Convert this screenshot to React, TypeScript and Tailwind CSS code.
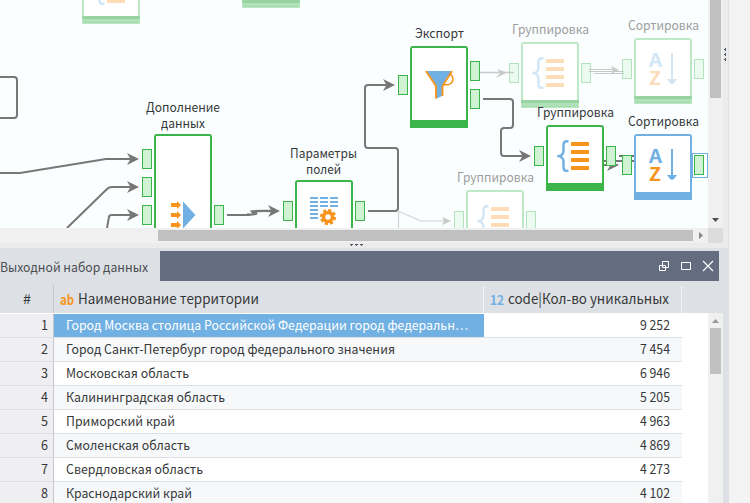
import React from 'react';

type Tone = 'green' | 'blue' | 'faded';

function Label({ x, y, w, text, faded }: { x: number; y: number; w: number; text: string; faded?: boolean }) {
  return (
    <svg className="absolute overflow-visible" style={{ left: x, top: y, width: w, height: 18 }}>
      <text x="0" y="14" textLength={w} lengthAdjust="spacingAndGlyphs" className={faded ? 'fill-[#9b9d9e] text-[13px]' : 'fill-[#363839] text-[13px]'}>
        {text}
      </text>
    </svg>
  );
}

function Fit({ text, w, size, className }: { text: string; w: number; size: number; className: string }) {
  return (
    <svg className="h-5 shrink-0 overflow-visible" style={{ width: w }}>
      <text x="0" y="14" fontSize={size} textLength={w} lengthAdjust="spacingAndGlyphs" className={className}>
        {text}
      </text>
    </svg>
  );
}

function Port({ x, y, faded }: { x: number; y: number; faded?: boolean }) {
  return (
    <div
      className={faded ? 'absolute h-5 w-2.5 border border-[#b5e3bd] bg-[#ecfbf0]' : 'absolute h-5 w-2.5 border border-[#3bb54a] bg-[#cff3d2]'}
      style={{ left: x, top: y }}
    />
  );
}

const frame: Record<Tone, string> = {
  green: 'border-[#3bb54a]',
  blue: 'border-[#71b0e3]',
  faded: 'border-[#bfe8c6]',
};

function Node({ x, y, h, tone, children }: { x: number; y: number; h: number; tone: Tone; children?: React.ReactNode }) {
  return (
    <div className={`absolute flex w-[58px] flex-col rounded-t-[3px] border-2 border-b-0 bg-white ${frame[tone]}`} style={{ left: x, top: y, height: h }}>
      <div className="flex min-h-0 flex-1 items-start justify-center">{children}</div>
      {tone === 'faded' ? (
        <div className="-mx-0.5 flex h-2 shrink-0 flex-col border border-[#bce7c3] bg-[#b1e1b9]">
          <div className="-mx-px -mt-px h-[3px] bg-[#97d4a2]" />
          <div className="mt-[3px] h-px bg-[#a3dbac]" />
        </div>
      ) : (
        <div className={tone === 'green' ? '-mx-0.5 h-2 shrink-0 bg-[#3bb54a]' : '-mx-0.5 h-2 shrink-0 bg-[#71b0e3]'} />
      )}
    </div>
  );
}

function GroupIcon({ faded }: { faded?: boolean }) {
  return (
    <svg className="mt-[13px] mr-[3px] shrink-0" width="33" height="32" opacity={faded ? 0.31 : 1}>
      <path d="M11.500 1.300H10Q6.500 1.300 6.500 4.800V10.500Q6.500 15 2 16.200Q6.500 17.400 6.500 22V27.500Q6.500 31 10 31H11.500" fill="none" stroke="#71b0e3" strokeWidth="2.400" />
      <path d="M14 2h18v4H14zM14 10h18v4H14zM14 18h18v4H14zM14 26h18v4H14z" fill="#f7941e" />
    </svg>
  );
}

function SortIcon({ faded }: { faded?: boolean }) {
  return (
    <svg className="mt-[13px] ml-0.5 shrink-0 overflow-visible" width="32" height="34" opacity={faded ? 0.31 : 1}>
      <text x="1" y="14" fontSize="19" fontWeight="700" textLength="13" lengthAdjust="spacingAndGlyphs" fill="#71b0e3">A</text>
      <text x="1" y="32" fontSize="19" fontWeight="700" textLength="12" lengthAdjust="spacingAndGlyphs" fill="#f7941e">Z</text>
      <path d="M24 0v28" stroke="#71b0e3" strokeWidth="2" />
      <path d="M19 26h10l-3 4-2 1-2-1z" fill="#71b0e3" />
    </svg>
  );
}

function MergeIcon() {
  return (
    <svg className="mt-[64px] ml-0.5 shrink-0 overflow-visible" width="26" height="30">
      <path d="M12 1.500L24.500 15 12 28.500z" fill="#71b0e3" />
      <path d="M0 3h6V1l4 4-4 4V7H0zM0 13h6v-2l4 4-4 4v-2H0zM0 23h6v-2l4 4-4 4v-2H0z" fill="#f7941e" />
    </svg>
  );
}

function FieldsIcon() {
  return (
    <svg className="mt-[15px] ml-0.5 shrink-0" width="30" height="30">
      <path d="M0 1h8M10 1h8M20 1h8M0 5h8M10 5h8M20 5h8M0 9h8M10 9h8M20 9h8M0 13h8M0 17h8M0 21h8" stroke="#71b0e3" strokeWidth="2" />
      <circle cx="18" cy="20" r="4.500" fill="none" stroke="#f7941e" strokeWidth="3.600" />
      <circle cx="18" cy="20" r="6.800" fill="none" stroke="#f7941e" strokeWidth="2.600" strokeDasharray="3.200 2.141" />
    </svg>
  );
}

function FunnelIcon() {
  return (
    <svg className="mt-[22px] ml-0.5 shrink-0" width="30" height="30">
      <path d="M1 1H27L18 16V25.500L11 29V16z" fill="#71b0e3" />
      <path d="M1 1L11 16V28.500M27 1L17.500 16V26" fill="none" stroke="#f7941e" strokeWidth="1.900" />
      <path d="M25 4C28.500 6 29 10 26.500 13Q24 15.500 19 14.500" fill="none" stroke="#f7941e" strokeWidth="1.600" />
    </svg>
  );
}

function Arrow({ x, y }: { x: number; y: number }) {
  return <path d={`M${x} ${y}l-12 -6 3.5 6 -3.5 6z`} fill="#777" />;
}

function Wires() {
  return (
    <svg className="absolute inset-0" width="708" height="228" fill="none" stroke="#777" strokeWidth="2">
      <path d="M0 77H14Q17 77 17 80V115Q17 118 14 118H0" />
      <path d="M0 173H20L106 159H131M67 228L107 189Q109 187 112 187H131M107 228L109 217Q109 215 112 215H131M227 215H250M368 211H395Q398 211 398 208V151Q398 148 395 148H368Q365 148 365 145V88Q365 85 368 85H387M483 99H510Q513 99 513 102V125Q513 128 510 128H504Q501 128 501 131V153Q501 156 504 156H523" />
      <path d="M247 214.500Q253 215 257 213.500Q253 213 252 211.500Q259 210.500 272 211" strokeWidth="2.300" />
      <path d="M398 211L421 221H445M398.500 212V228" stroke="#d0d2d2" strokeWidth="1.200" />
      <path d="M480 72.500H514" stroke="#c8caca" strokeWidth="1.600" />
      <path d="M589 69.500H614M589 71.500H624M594 73.500H624" stroke="#c8caca" strokeWidth="1" />
      <path d="M604 161H634M604 165H612M619 156H634" />
      <g stroke="none">
        <Arrow x={139} y={159} />
        <Arrow x={139} y={187} />
        <Arrow x={139} y={215} />
        <Arrow x={280} y={211} />
        <Arrow x={395} y={85} />
        <Arrow x={531} y={156} />
        <Arrow x={619} y={165} />
        <path d="M451 221l-9 -4 2 4 -2 4zM507 72.500l-10 -3.500 3 4 -4 5zM619 70l-8 -4 2 4 -2 4z" fill="#c8caca" />
      </g>
    </svg>
  );
}

function Canvas() {
  return (
    <div className="relative h-[228px] w-[708px] overflow-hidden bg-[#fbfeff]">
      <Node x={82} y={-42} h={66} tone="faded"><GroupIcon faded /></Node>
      <Node x={242} y={-58} h={66} tone="faded" />

      <Label x={512} y={20} w={77} text="Группировка" faded />
      <Node x={521} y={42} h={66} tone="faded"><GroupIcon faded /></Node>
      <Port x={509} y={63} faded />
      <Port x={581} y={63} faded />
      <Label x={628} y={16} w={71} text="Сортировка" faded />
      <Node x={634} y={38} h={66} tone="faded"><SortIcon faded /></Node>
      <Port x={622} y={59} faded />
      <Port x={694} y={59} faded />
      <Label x={457} y={168} w={77} text="Группировка" faded />
      <Node x={466} y={190} h={66} tone="faded"><GroupIcon faded /></Node>
      <Port x={454} y={211} faded />
      <Port x={526} y={211} faded />

      <Wires />

      <Label x={146} y={98} w={74} text="Дополнение" />
      <Label x={161} y={114} w={44} text="данных" />
      <Node x={154} y={134} h={110} tone="green"><MergeIcon /></Node>
      <Port x={142} y={149} />
      <Port x={142} y={177} />
      <Port x={142} y={205} />
      <Port x={214} y={205} />

      <Label x={290} y={144} w={67} text="Параметры" />
      <Label x={306} y={160} w={35} text="полей" />
      <Node x={295} y={180} h={82} tone="green"><FieldsIcon /></Node>
      <Port x={283} y={201} />
      <Port x={355} y={201} />

      <Label x={415} y={24} w={49} text="Экспорт" />
      <Node x={410} y={46} h={82} tone="green"><FunnelIcon /></Node>
      <Port x={398} y={75} />
      <Port x={470} y={61} />
      <Port x={470} y={89} />

      <Label x={537} y={103} w={77} text="Группировка" />
      <Node x={546} y={125} h={66} tone="green"><GroupIcon /></Node>
      <Port x={534} y={146} />
      <Port x={606} y={146} />
      <Label x={628} y={112} w={71} text="Сортировка" />
      <Node x={634} y={134} h={66} tone="blue"><SortIcon /></Node>
      <div className="absolute left-[692px] top-[153px] h-[25px] w-4 border border-[#71b0e3] bg-white" />
      <Port x={622} y={155} />
      <Port x={694} y={155} />
    </div>
  );
}

const rows = [
  { name: 'Город Москва столица Российской Федерации город федеральн…', w: 402, value: '9 252' },
  { name: 'Город Санкт-Петербург город федерального значения', w: 329, value: '7 454' },
  { name: 'Московская область', w: 123, value: '6 946' },
  { name: 'Калининградская область', w: 159, value: '5 205' },
  { name: 'Приморский край', w: 109, value: '4 963' },
  { name: 'Смоленская область', w: 124, value: '4 869' },
  { name: 'Свердловская область', w: 137, value: '4 273' },
  { name: 'Краснодарский край', w: 126, value: '4 102' },
];

function Table() {
  return (
    <div className="flex h-[222px] flex-col">
      <div className="flex h-8 shrink-0 items-start bg-[#dde1e5]">
        <div className="mt-1 flex h-7 w-[54px] items-center justify-center border-r border-[#c3c7cf] pt-0.5 pl-px">
          <Fit text="#" w={8} size={14} className="fill-[#363839]" />
        </div>
        <div className="mt-[5px] flex h-[27px] w-[430px] items-center gap-1 border-r border-[#f1f3f5] pl-1.5">
          <div className="mt-0.5 flex"><Fit text="ab" w={14} size={13} className="fill-[#f7941e] font-semibold" /></div>
          <Fit text="Наименование территории" w={181} size={14} className="fill-[#363839]" />
        </div>
        <div className="mt-[5px] flex h-[27px] w-[198px] items-center gap-1 border-r border-[#f1f3f5] pl-1.5">
          <div className="mt-0.5 flex"><Fit text="12" w={14} size={13} className="fill-[#71b0e3] font-semibold" /></div>
          <Fit text="code|Кол-во уникальных" w={161} size={14} className="fill-[#363839]" />
        </div>
      </div>
      <div className="flex min-h-0 flex-1 bg-white">
        <div className="w-[682px] pt-px">
          {rows.map((r, i) => (
            <div key={r.name} className="flex h-6">
              <div className="flex w-[54px] items-center justify-end border-r border-b border-r-[#c3c7cf] border-b-[#dbdee2] bg-[#efeff1] pr-[5px]">
                <Fit text={String(i + 1)} w={7} size={13} className="fill-[#363839]" />
              </div>
              <div className={`flex w-[430px] items-center border-b border-[#dbdee2] pl-3 ${i === 0 ? 'bg-[#71b0e3]' : i % 2 ? 'bg-[#f7f8fa]' : 'bg-white'}`}>
                <Fit text={r.name} w={r.w} size={13} className={i === 0 ? 'fill-white' : 'fill-[#363839]'} />
              </div>
              <div className={`flex w-[198px] items-center justify-end border-b border-[#dbdee2] pr-3 ${i % 2 ? 'bg-[#f7f8fa]' : 'bg-white'}`}>
                <Fit text={r.value} w={30} size={13} className="fill-[#363839]" />
              </div>
            </div>
          ))}
        </div>
        <div className="w-[26px]" />
        <div className="flex w-[15px] flex-col items-center bg-[#f0f0f0] pt-1.5">
          <svg width="7" height="4"><path d="M0 4L3.500 0 7 4z" fill="#999" /></svg>
          <div className="mt-[5px] h-[46px] w-[11px] bg-[#c0c0c0]" />
        </div>
        <div className="flex-1 bg-[#dde1e5]" />
      </div>
    </div>
  );
}

export default function App() {
  return (
    <div className="flex h-[503px] w-[750px] overflow-hidden bg-[#f3f3f3] font-['Noto_Sans_CJK_SC','Noto_Sans',sans-serif]">
      <div className="flex w-[729px] flex-col">
        <div className="flex h-[248px] shrink-0 bg-[#ebebeb]">
          <div className="flex w-[723px] flex-col">
            <div className="flex">
              <Canvas />
              <div className="flex w-[15px] flex-col items-center justify-between bg-[#f0f0f0] pb-1.5">
                <div className="h-[98px] w-[11px] bg-[#c0c0c0]" />
                <svg width="7" height="4"><path d="M0 0H7L3.500 4z" fill="#505050" /></svg>
              </div>
            </div>
            <div className="flex h-[15px] bg-[#f0f0f0]">
              <div className="mt-0.5 ml-[158px] h-[11px] w-[535px] bg-[#c0c0c0]" />
              <div className="flex flex-1 items-center justify-center">
                <svg width="4" height="7"><path d="M0 0V7L4 3.500z" fill="#888" /></svg>
              </div>
              <div className="w-[15px] bg-[#dcdcdc]" />
            </div>
            <div className="flex h-[5px] items-start justify-center gap-0.5 pt-px pr-[10px]">
              {[0, 1, 2].map((i) => <svg key={i} width="3" height="2"><path d="M0 0H3V1H2V2H1V1H0z" fill="#4d586c" /></svg>)}
            </div>
          </div>
          <div className="flex w-[5px] flex-col items-start gap-0.5 pt-12 pl-px">
            {[0, 1, 2].map((i) => <svg key={i} className="shrink-0" width="2" height="3"><path d="M1 0H2V3H1V2H0V1H1z" fill="#4d586c" /></svg>)}
          </div>
          <div className="w-px bg-[#dde1e8]" />
        </div>
        <div className="flex h-[33px] shrink-0 bg-[#dde1e5] pt-[3px]">
          <div className="flex w-[160px] items-center pt-1">
            <Fit text="Выходной набор данных" w={148} size={13} className="fill-[#4b4e52]" />
          </div>
          <div className="flex h-[30px] w-[559px] items-center justify-end bg-[#636d7f] pr-1.5">
            <svg width="54" height="10" className="overflow-visible" fill="none" stroke="white">
              <path d="M3.500 .5H9.500V6.500H3.500zM.5 4.500H6.500V9.500H.5zM22.500 1.500H31.500V8.500H22.500z" />
              <path d="M44 0L54 10M54 0L44 10" strokeWidth="1.200" />
            </svg>
          </div>
        </div>
        <Table />
      </div>
    </div>
  );
}
